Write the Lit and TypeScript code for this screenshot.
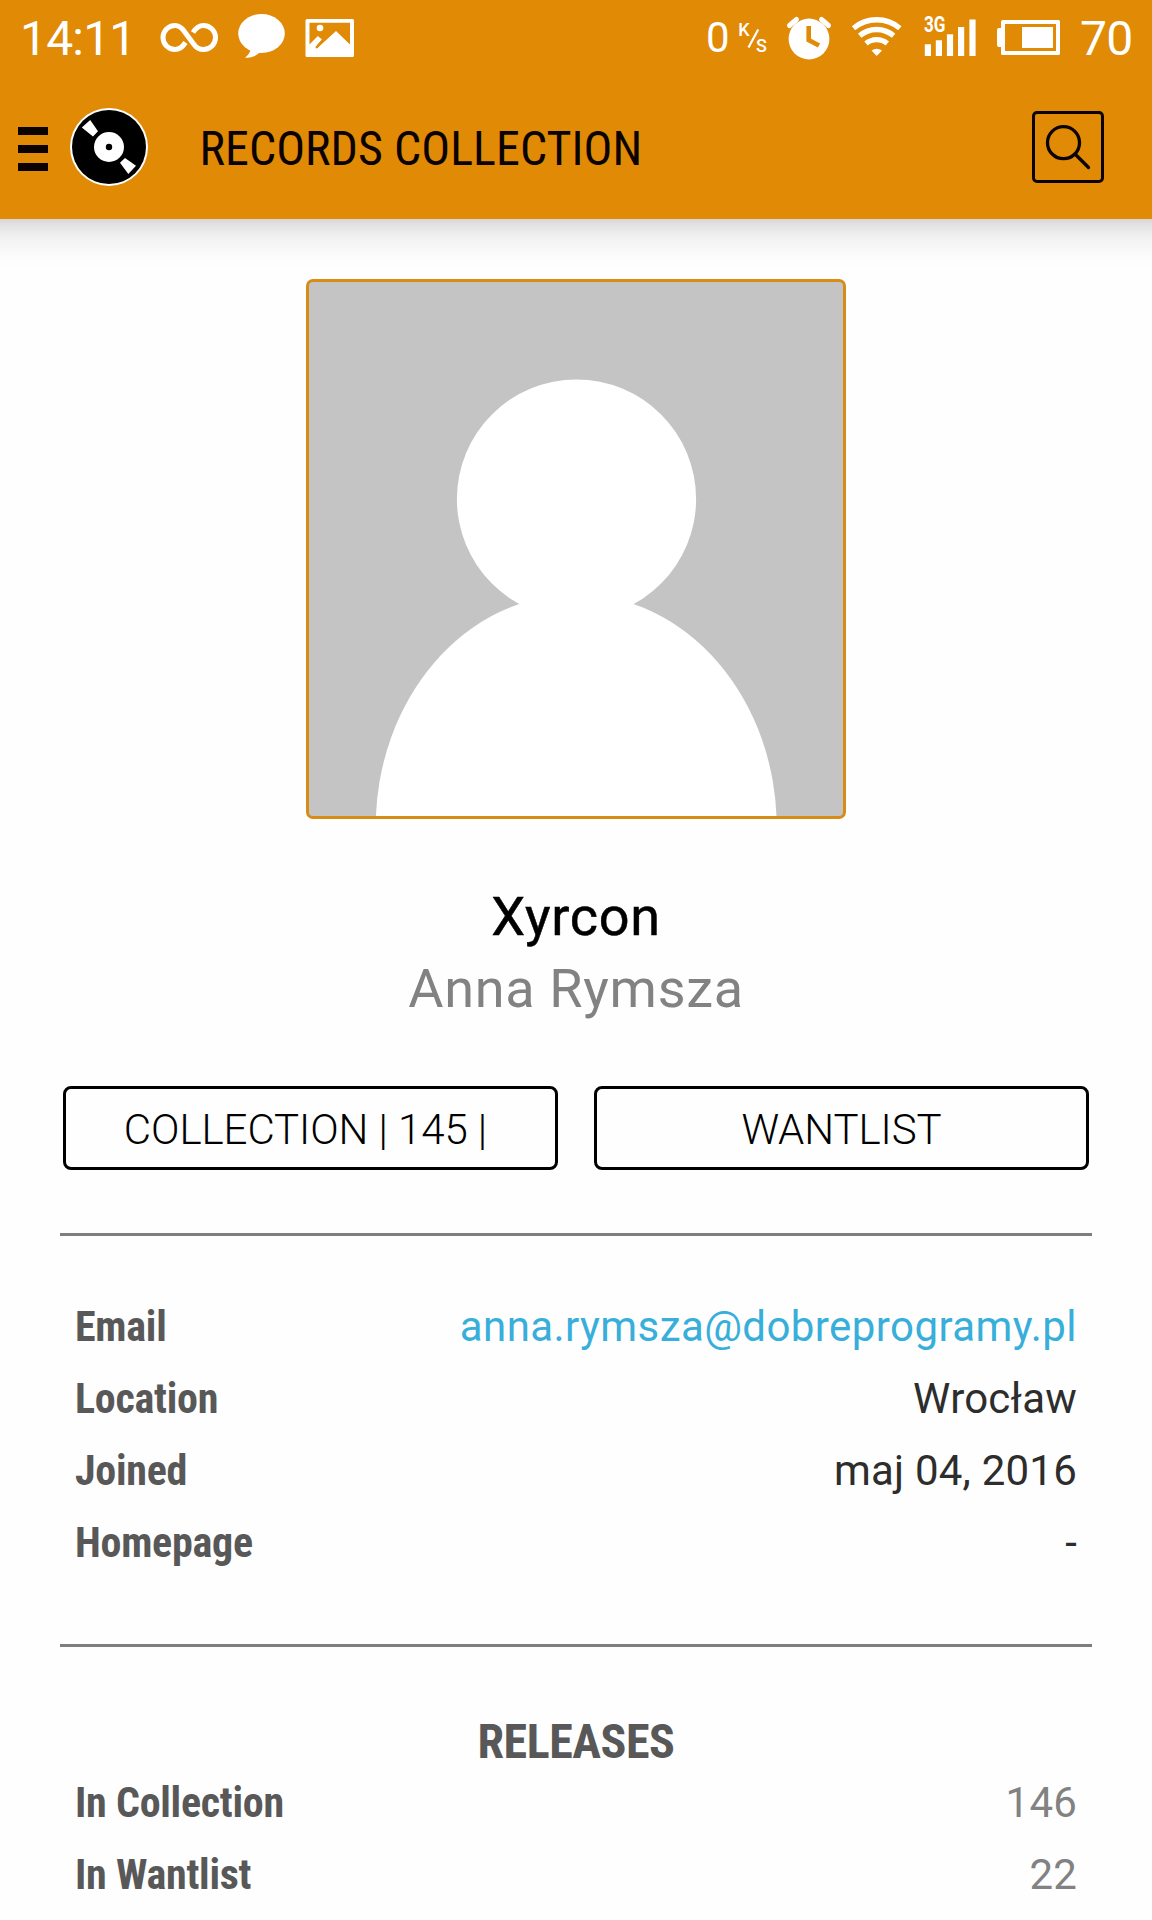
import { LitElement, html, css } from "lit";
import { customElement, property } from "lit/decorators.js";

@customElement("status-bar")
class StatusBar extends LitElement {
  static styles = css`
    :host { display: block; color: #fff; }
    .bar { display: flex; align-items: center; height: 76px; padding: 0 18px 0 20px; font-family: Roboto, "Liberation Sans", sans-serif; }
    .text { font-size: 48px; line-height: 46px; white-space: nowrap; font-weight: 400; }
    .time { width: 140px; letter-spacing: -0.8px; padding-top: 2px; }
    .rate { font-size: 42px; width: 28px; }
    .space { flex: 1; }
    .level { box-sizing: border-box; width: 62px; padding: 2px 0 0 8px; letter-spacing: -0.8px; }
    svg { display: block; flex: none; fill: currentColor; }
    .line { fill: none; stroke: currentColor; }
    .cut { fill: none; stroke: #e08a06; }
    .tiny { font-weight: 500; }
  `;
  render() {
    return html`<div class="bar">
      <div class="text time">14:11</div>
      <svg width="200" height="76" viewBox="160 0 200 76">
        <path class="line" stroke-width="5" d="M185.500 42.500C182.500 47 179.500 49.500 175 49.500A12 12 0 0 1 175 25.500C179 25.500 181.500 27.500 184 31L194 44.500C196.500 48 199.500 49.500 203.500 49.500A12 12 0 0 0 203.500 25.500C199 25.500 196 27.800 193 32.500"/>
        <ellipse cx="261.500" cy="33.500" rx="23.300" ry="19.500"/>
        <path d="M248 46L251 48C250.500 52 248.500 55 245 57.700C252 58.500 257 55.500 261 51Z"/>
        <path fill-rule="evenodd" d="M307 19H352.500Q354 19 354 20.500V55.500Q354 57 352.500 57H307Q305.500 57 305.500 55.500V20.500Q305.500 19 307 19ZM309.500 22.800V44.500L317.800 36L322 39.500L316 46.500L317.500 48L336 31L350 44.500V22.800Z"/>
        <path class="cut" stroke-width="2" d="M323 40L316 48"/>
        <circle cx="320" cy="28" r="3.300"/>
      </svg>
      <div class="space"></div>
      <div class="text rate">0</div>
      <svg width="338" height="76" viewBox="734 0 338 76">
        <text class="tiny" x="738.300" y="35.500" font-size="18">K</text>
        <path class="line" stroke-width="2.200" d="M758.200 29.500L748.500 47.500"/>
        <text class="tiny" x="756" y="52.300" font-size="18">S</text>
        <circle cx="809" cy="39" r="20.400"/>
        <path class="line" stroke-width="5" stroke-linecap="round" d="M789.500 25.500L796.500 19.500M828.500 25.500L821.500 19.500"/>
        <path class="cut" stroke-width="4.600" d="M808.700 26V40L819 45.500"/>
        <path class="line" stroke-width="5.300" d="M853.500 28.200A36 36 0 0 1 899.800 28.200M859.700 35.800A26 26 0 0 1 893.600 35.800M866 43.500A16.500 16.500 0 0 1 887.300 43.500"/>
        <path d="M871.500 50.500Q876.700 46.800 882 50.500L876.700 56Z"/>
        <text x="924" y="31.800" font-size="21.500" textLength="21.500" lengthAdjust="spacingAndGlyphs" font-weight="700">3G</text>
        <path d="M924.800 44.300h6.200V56h-6.200zM935.800 40.300h6.200V56h-6.200zM946.900 34.300h6.200V56h-6.200zM958 27h6.200v29h-6.200zM969.400 19.500h6.200V56h-6.200z"/>
        <path fill-rule="evenodd" d="M1003 20H1058.500Q1060 20 1060 21.500V53.500Q1060 55 1058.500 55H1002.500Q1001 55 1001 53.500V47H999Q997 47 997 45V30Q997 28 999 28H1001V22Q1001 20 1003 20ZM1005 24V51H1056V24Z"/>
        <rect x="1022" y="27" width="31" height="21"/>
      </svg>
      <div class="text level">70</div>
    </div>`;
  }
}

@customElement("app-header")
class AppHeader extends LitElement {
  static styles = css`
    :host { display: block; color: #0a0300; }
    .bar { display: flex; align-items: center; height: 143px; padding: 0 48px 2px 18px; box-sizing: border-box; }
    .menu { display: flex; flex-direction: column; gap: 10px; width: 30px; margin: 5px 22px 0 0; }
    .menu i { height: 8px; background: currentColor; }
    svg { display: block; flex: none; }
    .disc { margin-right: 51.5px; }
    .title { flex: 1; font: 400 48px/56px "Roboto Condensed", Roboto, sans-serif; font-stretch: 75%; white-space: nowrap; padding-top: 4px; letter-spacing: 0.05px; }
    .search { box-sizing: border-box; width: 72px; height: 72px; border: 3px solid currentColor; border-radius: 5px; }
  `;
  render() {
    return html`<div class="bar">
      <div class="menu"><i></i><i></i><i></i></div>
      <svg class="disc" width="78" height="78" viewBox="-39 -39 78 78">
        <circle r="39" fill="#fff"/><circle r="37" fill="#000"/>
        <path fill="#fff" d="M-27.200 -19.500L-18.800 -27L-11 -15.800L-16 -10.500ZM27 18.800L19.300 27L11 15.800L16 11Z"/>
        <circle r="15" fill="#fff"/><circle r="3.200" fill="#000"/>
      </svg>
      <div class="title">RECORDS COLLECTION</div>
      <div class="search"><svg width="66" height="66" viewBox="1035 114 66 66" fill="none" stroke="#0a0300" stroke-width="3.300" stroke-linecap="round"><circle cx="1063.500" cy="142.700" r="16"/><path d="M1075.500 154.500L1088.500 167.500"/></svg></div>
    </div>`;
  }
}

@customElement("info-row")
class InfoRow extends LitElement {
  @property() label = "";
  @property() value = "";
  @property() tone = "dark";
  static styles = css`
    :host { display: block; }
    .row { display: flex; justify-content: space-between; font-size: 42px; line-height: 72px; font-family: Roboto, sans-serif; white-space: nowrap; }
    .label { font-family: "Roboto Condensed", Roboto, sans-serif; font-stretch: 75%; font-weight: 700; color: #585858; letter-spacing: -0.25px; }
    .dark { color: #2d2d2d; letter-spacing: 0.22px; }
    .link { color: #38aedb; letter-spacing: 0.42px; }
    .grey { color: #828282; letter-spacing: 0.2px; }
  `;
  render() {
    return html`<div class="row"><span class="label">${this.label}</span><span class=${this.tone}>${this.value}</span></div>`;
  }
}

const PROFILE = [
  ["Email", "anna.rymsza@dobreprogramy.pl", "link"],
  ["Location", "Wrocław", "dark"],
  ["Joined", "maj 04, 2016", "dark"],
  ["Homepage", "-", "dark"],
];
const RELEASES = [
  ["In Collection", "146", "grey"],
  ["In Wantlist", "22", "grey"],
];

@customElement("app-root")
class AppRoot extends LitElement {
  static styles = css`
    :host { display: block; width: 1152px; height: 1920px; overflow: hidden; background: #fefefe; font-family: Roboto, "Liberation Sans", sans-serif; }
    .top { background: #e08a06; height: 219px; }
    .shade { height: 60px; background: linear-gradient(#d9d5d6 0, #e2e0e1 5px, #ededed 14px, #f5f5f5 24px, #fbfbfb 36px, #fefefe 50px); }
    .page { display: flex; flex-direction: column; padding: 0 60px; }
    .avatar { align-self: center; box-sizing: border-box; width: 540px; height: 540px; border: 3px solid #d78c15; border-radius: 7px; overflow: hidden; background: #c4c4c4; }
    .avatar svg { display: block; }
    .names { margin: 62px 0 61px; text-align: center; font-size: 54px; line-height: 72px; letter-spacing: 0.7px; }
    .nick { color: #000; -webkit-text-stroke: 0.5px #000; }
    .real { color: #828282; }
    .buttons { display: flex; gap: 36px; padding: 0 3px; }
    .button { flex: 1; box-sizing: border-box; height: 84px; border: 3px solid #000; border-radius: 8px; text-align: center; white-space: pre; font-size: 42px; font-weight: 300; line-height: 81px; letter-spacing: -0.06px; color: #000; }
    .rule { height: 3px; background: #7e7e7e; }
    .first { margin-top: 63px; }
    .list { padding: 55px 15px 65px; }
    .stats { padding: 69px 15px 0; }
    .heading { text-align: center; font: 700 48px/52px "Roboto Condensed", Roboto, sans-serif; font-stretch: 75%; color: #585858; letter-spacing: -0.45px; margin-bottom: -1px; }
  `;
  render() {
    const rows = (list: string[][]) => list.map(([l, v, t]) => html`<info-row label=${l} value=${v} tone=${t}></info-row>`);
    return html`
      <div class="top"><status-bar></status-bar><app-header></app-header></div>
      <div class="shade"></div>
      <div class="page">
        <div class="avatar"><svg width="534" height="534" viewBox="309 282 534 534" fill="#fff"><circle cx="576.500" cy="499" r="119.600"/><ellipse cx="576.200" cy="827" rx="200.500" ry="232.600"/></svg></div>
        <div class="names"><div class="nick">Xyrcon</div><div class="real">Anna Rymsza</div></div>
        <div class="buttons"><div class="button">${"COLLECTION | 145 | "}</div><div class="button">WANTLIST</div></div>
        <div class="rule first"></div>
        <div class="list">${rows(PROFILE)}</div>
        <div class="rule"></div>
        <div class="stats"><div class="heading">RELEASES</div>${rows(RELEASES)}</div>
      </div>`;
  }
}
